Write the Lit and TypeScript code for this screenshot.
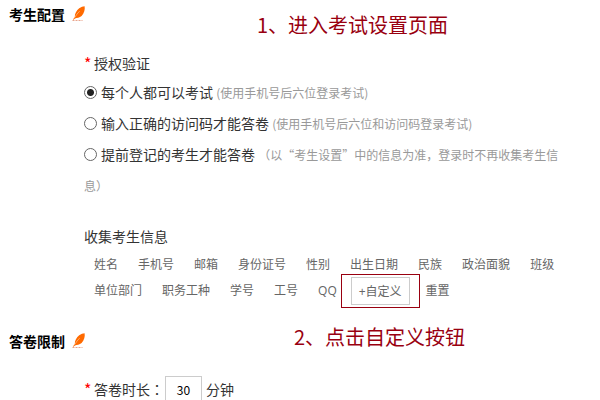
import { LitElement, html, css } from "lit";
import { customElement, property } from "lit/decorators.js";

@customElement("feather-icon")
class FeatherIcon extends LitElement {
  static styles = css`
    :host {
      display: inline-flex;
    }
  `;

  render() {
    return html`<svg width="14" height="16" viewBox="0 0 14 16" aria-hidden="true">
      <path d="M12.6 0.2 C13.2 3.4 12.2 7.4 9.6 10 C7.6 11.9 4.8 11.8 3 12.4 L1.4 13.8 L0.9 13.4 L2.8 11 C2.6 7.8 4.6 4.2 7.2 2.2 C9 0.9 11 0.4 12.6 0.2 Z" fill="#ff6a00" />
      <path d="M2.6 11.6 C4.2 9 5.8 7 7.6 5.2" fill="none" stroke="#ffc490" stroke-width="0.7" />
      <path d="M0.5 14.5 H10.5" stroke="#e9a58c" stroke-width="1" stroke-dasharray="2 1" />
    </svg>`;
  }
}

@customElement("section-title")
class SectionTitle extends LitElement {
  @property() text = "";

  static styles = css`
    :host {
      display: block;
    }
    .title {
      display: flex;
      align-items: center;
      gap: 7px;
      margin: 0;
      font-size: 14px;
      line-height: 28px;
      font-weight: 700;
      color: #000;
    }
  `;

  render() {
    return html`<h2 class="title">${this.text}<feather-icon></feather-icon></h2>`;
  }
}

const options = [
  { text: "每个人都可以考试", hint: "(使用手机号后六位登录考试)" },
  { text: "输入正确的访问码才能答卷", hint: "(使用手机号后六位和访问码登录考试)" },
  {
    text: "提前登记的考生才能答卷",
    hint: "（以“考生设置”中的信息为准，登录时不再收集考生信息）",
  },
];

const fields = [
  "姓名", "手机号", "邮箱", "身份证号", "性别", "出生日期", "民族",
  "政治面貌", "班级", "单位部门", "职务工种", "学号", "工号", "QQ",
];

@customElement("app-root")
class AppRoot extends LitElement {
  static styles = css`
    :host {
      display: block;
      position: relative;
      background: #fff;
      color: #333;
      font-family: "Noto Sans CJK SC", sans-serif;
      font-size: 14px;
    }
    .section {
      padding-left: 9px;
    }
    .section + .section {
      margin-top: 22px;
    }
    .body {
      padding: 21px 32px 0 75px;
    }
    .label {
      display: flex;
      gap: 4px;
      line-height: 28px;
    }
    .star {
      width: 6px;
      font-size: 16px;
      color: #f00;
    }
    .options {
      margin: 0;
      padding: 0;
      border: 0;
      line-height: 31px;
    }
    .option {
      display: block;
    }
    .radio {
      appearance: none;
      box-sizing: border-box;
      width: 13px;
      height: 13px;
      margin: 0 4px 0 0;
      border: 1px solid #666;
      border-radius: 50%;
      background: #fff;
      vertical-align: -1px;
    }
    .radio:checked {
      background: radial-gradient(circle, #222 3px, #fff 4px);
    }
    .hint {
      font-size: 12px;
      color: #999;
    }
    .collect {
      margin-top: 20px;
      padding-bottom: 1px;
      line-height: 31px;
    }
    .fields {
      display: flex;
      flex-wrap: wrap;
      align-items: center;
    }
    .field {
      padding: 0 10px;
      border: 0;
      background: none;
      font-family: "Open Sans", "Noto Sans CJK SC", sans-serif;
      font-size: 12px;
      line-height: 24px;
      color: #666;
    }
    .custom {
      position: relative;
      margin: 0 6px 0 4px;
    }
    .add {
      display: block;
      height: 28px;
      padding: 0 7px;
      border: 1px solid #ccc;
      background: #fff;
      font-family: "Open Sans", "Noto Sans CJK SC", sans-serif;
      font-size: 12px;
      color: #666;
    }
    .frame {
      position: absolute;
      inset: -3px -10px;
      border: 1px solid #990010;
      pointer-events: none;
    }
    .duration {
      display: flex;
      align-items: center;
      gap: 4px;
    }
    .colon {
      font-family: "Noto Sans CJK JP", sans-serif;
    }
    .minutes {
      box-sizing: border-box;
      width: 37px;
      height: 26px;
      margin-left: -3px;
      padding: 0;
      border: 1px solid #ccc;
      text-align: center;
      font-family: "Noto Sans CJK SC", sans-serif;
      font-size: 12px;
      color: #000;
    }
    .note {
      position: absolute;
      margin: 0;
      font-size: 20px;
      line-height: 30px;
      color: #990010;
      white-space: nowrap;
    }
    .first {
      left: 257px;
      top: 10px;
    }
    .second {
      left: 294px;
      top: 322px;
    }
  `;

  render() {
    return html`
      <section class="section">
        <section-title text="考生配置"></section-title>
        <div class="body">
          <div class="label" id="auth"><span class="star">*</span>授权验证</div>
          <div class="options" role="radiogroup" aria-labelledby="auth">
            ${options.map(
              (o, i) => html`<label class="option"
                ><input class="radio" type="radio" name="auth" ?checked=${i === 0} />${o.text}
                <span class="hint">${o.hint}</span></label
              >`
            )}
          </div>
          <div class="collect">收集考生信息</div>
          <div class="fields">
            ${fields.map((f) => html`<button class="field" type="button">${f}</button>`)}
            <div class="custom">
              <button class="add" type="button">+自定义</button>
              <span class="frame"></span>
            </div>
            <button class="field" type="button">重置</button>
          </div>
        </div>
      </section>
      <section class="section">
        <section-title text="答卷限制"></section-title>
        <div class="body">
          <div class="duration">
            <span class="star">*</span>
            <label for="minutes">答卷时长<span class="colon">：</span></label>
            <input class="minutes" id="minutes" type="text" value="30" />
            <span>分钟</span>
          </div>
        </div>
      </section>
      <p class="note first">1、进入考试设置页面</p>
      <p class="note second">2、点击自定义按钮</p>
    `;
  }
}
